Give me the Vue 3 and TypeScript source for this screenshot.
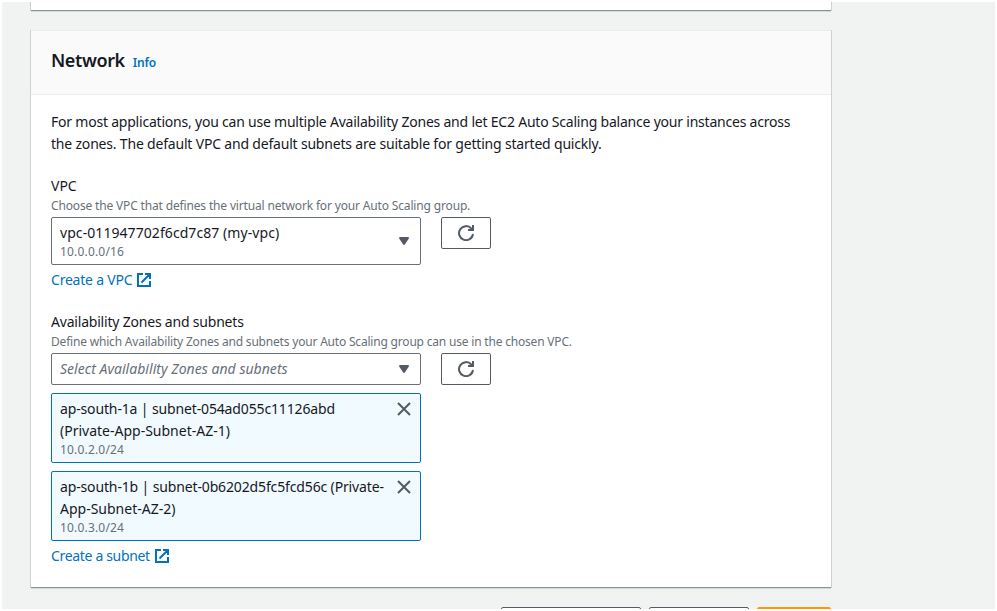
<script setup lang="ts">
interface TokenLine {
  text: string
  tight: boolean
}
interface Token {
  lines: TokenLine[]
  cidr: string
}

const tokens: Token[] = [
  {
    lines: [
      { text: 'ap-south-1a | subnet-054ad055c11126abd', tight: true },
      { text: '(Private-App-Subnet-AZ-1)', tight: false },
    ],
    cidr: '10.0.2.0/24',
  },
  {
    lines: [
      { text: 'ap-south-1b | subnet-0b6202d5fc5fcd56c (Private-', tight: true },
      { text: 'App-Subnet-AZ-2)', tight: false },
    ],
    cidr: '10.0.3.0/24',
  },
]
</script>

<template>
  <div class="page">
    <main class="column">
      <section class="card previous"></section>
      <section class="card network">
        <header class="card-header">
          <h2>Network</h2>
          <a class="info">Info</a>
        </header>
        <div class="card-body">
          <p class="intro">
            <span class="i1">For most applications, you can use multiple Availability Zones and let EC2 Auto Scaling balance your instances across</span><br />
            <span class="i2">the zones. The default VPC and default subnets are suitable for getting started quickly.</span>
          </p>

          <div class="field">
            <div class="label">VPC</div>
            <div class="hint h1">Choose the VPC that defines the virtual network for your Auto Scaling group.</div>
            <div class="row">
              <div class="select">
                <div>
                  <div class="vpc">vpc-011947702f6cd7c87 (my-vpc)</div>
                  <div class="cidr">10.0.0.0/16</div>
                </div>
                <svg class="caret" viewBox="0 0 16 16"><path d="M4 5h8l-4 6z" /></svg>
              </div>
              <button class="refresh" aria-label="Refresh">
                <svg viewBox="0 0 16 16"><path d="M15 9a7 7 0 1 1-1.6-5.4L15 5" /><path d="M15 0v5h-5" /></svg>
              </button>
            </div>
            <a class="link">
              <span class="l1">Create a VPC</span>
              <svg viewBox="0 0 16 16"><path d="M7 2H2v12h12V9M9 2h5v5M5.5 10.5 14 2" /></svg>
            </a>
          </div>

          <div class="field">
            <div class="label zones">Availability Zones and subnets</div>
            <div class="hint h2">Define which Availability Zones and subnets your Auto Scaling group can use in the chosen VPC.</div>
            <div class="row">
              <div class="select short">
                <div class="placeholder">Select Availability Zones and subnets</div>
                <svg class="caret" viewBox="0 0 16 16"><path d="M4 5h8l-4 6z" /></svg>
              </div>
              <button class="refresh" aria-label="Refresh">
                <svg viewBox="0 0 16 16"><path d="M15 9a7 7 0 1 1-1.6-5.4L15 5" /><path d="M15 0v5h-5" /></svg>
              </button>
            </div>
            <div v-for="token in tokens" :key="token.cidr" class="token">
              <div>
                <div v-for="line in token.lines" :key="line.text" :class="{ tight: line.tight }">{{ line.text }}</div>
                <div class="cidr">{{ token.cidr }}</div>
              </div>
              <svg class="close" viewBox="0 0 16 16"><path d="m2 2 12 12M14 2 2 14" /></svg>
            </div>
            <a class="link">
              <span class="l2">Create a subnet</span>
              <svg viewBox="0 0 16 16"><path d="M7 2H2v12h12V9M9 2h5v5M5.5 10.5 14 2" /></svg>
            </a>
          </div>
        </div>
      </section>
      <footer class="actions">
        <button class="action wide"></button>
        <button class="action"></button>
        <button class="action primary"></button>
      </footer>
    </main>
  </div>
</template>

<style>
body {
  overflow: hidden;
  background: #fff;
}
</style>

<style scoped>
* {
  box-sizing: border-box;
}
.page {
  width: 997px;
  height: 611px;
  border: 2px solid #fff;
  background: #f1f3f3;
  overflow: hidden;
  color: #16191f;
  font: 14px/22px "Noto Sans", "Open Sans", sans-serif;
  white-space: nowrap;
}
.column {
  width: 800px;
  margin-left: 29px;
}
.card {
  background: #fff;
  box-shadow: 1px 0 0 0 #ccd1d3, -1px 0 0 0 #ccd1d3, 0 1px 0 0 #d5dadb;
  border-bottom: 1px solid #879596;
}
.previous {
  height: 9px;
}
.network {
  margin-top: 19px;
  height: 558px;
  border-top: 1px solid #eaeded;
}
.card-header {
  display: flex;
  align-items: baseline;
  gap: 8px;
  height: 64px;
  padding: 18px 20px 0;
  background: #fafafa;
  border-bottom: 1px solid #eaeded;
}
h2 {
  margin: 0;
  font-size: 18px;
  line-height: 22px;
  font-weight: 600;
  letter-spacing: -0.4px;
}
.info {
  color: #0073bb;
  font-size: 12px;
  font-weight: 600;
  letter-spacing: -0.2px;
}
.card-body {
  padding: 16px 20px 0;
}
.intro {
  margin: 0 0 20px;
}
.i1 {
  letter-spacing: -0.214px;
}
.i2 {
  letter-spacing: -0.19px;
}
.field {
  margin-bottom: 20px;
}
.zones {
  letter-spacing: -0.2px;
}
.hint {
  padding-top: 1px;
  margin-bottom: 3px;
  color: #687078;
  font-size: 12px;
  line-height: 16px;
}
.h1 {
  letter-spacing: -0.158px;
}
.h2 {
  letter-spacing: -0.193px;
}
.row {
  display: flex;
  align-items: flex-start;
  gap: 20px;
}
.select {
  display: flex;
  align-items: center;
  justify-content: space-between;
  width: 370px;
  height: 48px;
  padding: 0 8px;
  border: 1px solid #687078;
  border-radius: 2px;
}
.short {
  height: 32px;
}
.vpc {
  letter-spacing: 0.07px;
}
.placeholder {
  color: #687078;
  font-style: italic;
  letter-spacing: 0.03px;
}
.cidr {
  color: #687078;
  font-size: 12px;
  line-height: 16px;
  letter-spacing: 0.18px;
}
.tight {
  letter-spacing: -0.14px;
}
svg {
  display: block;
  width: 16px;
  height: 16px;
  flex: none;
}
.caret {
  fill: #545b64;
  stroke: #545b64;
  stroke-width: 2px;
  stroke-linejoin: round;
}
.refresh {
  display: flex;
  align-items: center;
  justify-content: center;
  width: 50px;
  height: 32px;
  padding: 0;
  border: 1px solid #545b64;
  border-radius: 2px;
  background: #fff;
}
.refresh svg,
.close {
  fill: none;
  stroke: #545b64;
  stroke-width: 2px;
}
.token {
  display: flex;
  justify-content: space-between;
  width: 370px;
  height: 70px;
  margin-top: 8px;
  padding: 4px 8px;
  border: 1px solid #0073bb;
  border-radius: 2px;
  background: #f1faff;
}
.close {
  margin-top: 3px;
}
.link {
  display: flex;
  align-items: center;
  gap: 4px;
  margin-top: 4px;
  color: #0073bb;
}
.l1 {
  letter-spacing: -0.22px;
}
.l2 {
  letter-spacing: -0.33px;
}
.link svg {
  fill: none;
  stroke: #0073bb;
  stroke-width: 2px;
}
.actions {
  display: flex;
  justify-content: flex-end;
  gap: 8px;
  margin-top: 19px;
}
.action {
  width: 100px;
  height: 32px;
  border: 1px solid #545b64;
  border-radius: 2px;
  background: #fff;
}
.wide {
  width: 140px;
}
.primary {
  width: 74px;
  border-color: #ff9900;
  background: #ff9900;
}
</style>
